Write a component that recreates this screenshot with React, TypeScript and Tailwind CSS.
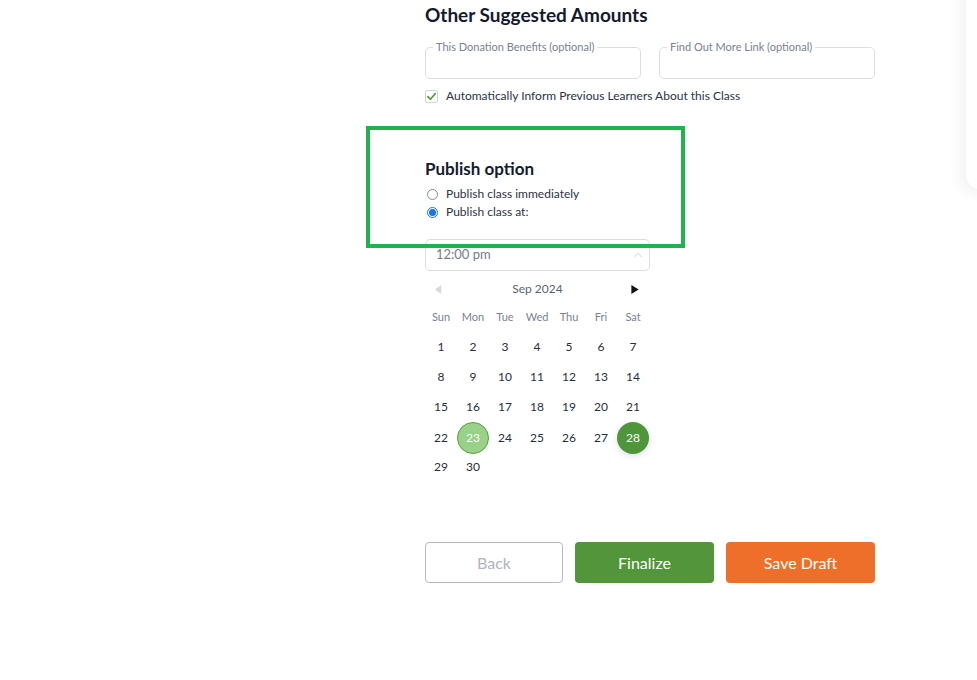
import { ChevronUp } from 'lucide-react';

const DAY_NAMES = ['Sun', 'Mon', 'Tue', 'Wed', 'Thu', 'Fri', 'Sat'];

// Sep 2024 starts on a Sunday
const WEEKS: (number | null)[][] = [
  [1, 2, 3, 4, 5, 6, 7],
  [8, 9, 10, 11, 12, 13, 14],
  [15, 16, 17, 18, 19, 20, 21],
  [22, 23, 24, 25, 26, 27, 28],
  [29, 30, null, null, null, null, null],
];

export default function App() {
  return (
    <div className="relative min-h-[680px] w-full overflow-hidden bg-white font-['Lato',sans-serif] text-[#1d2233]">
      {/* faint side panel shadow at the right edge */}
      <div className="absolute -top-4 left-[966px] h-[206px] w-[40px] rounded-bl-2xl bg-white shadow-[-6px_4px_14px_rgba(0,0,0,0.05)]" />

      <div className="relative ml-[425px] w-[450px] pt-[3px]">
        <h2 className="text-[19px] font-bold leading-6 text-[#141a2e]">Other Suggested Amounts</h2>

        <div className="mt-[14px] flex gap-[18px]">
          <OutlinedField label="This Donation Benefits (optional)" />
          <OutlinedField label="Find Out More Link (optional)" />
        </div>

        <label className="mt-[9px] flex items-center gap-[8px] text-[12px] leading-4 text-[#2c3144]">
          <span className="flex h-[13px] w-[13px] items-center justify-center rounded-[2px] border border-[#cfd3da] bg-white">
            <svg viewBox="0 0 12 12" className="h-[11px] w-[11px]">
              <path d="M2 6.2 L4.8 9 L10.2 2.8" fill="none" stroke="#4e9a36" strokeWidth="1.8" strokeLinecap="round" strokeLinejoin="round" />
            </svg>
          </span>
          Automatically Inform Previous Learners About this Class
        </label>

        <h3 className="mt-[55px] text-[17px] font-bold leading-5 text-[#141a2e]">Publish option</h3>

        <div className="mt-[7px] flex flex-col gap-[2px] text-[12px] leading-4 text-[#2c3144]">
          <label className="flex items-center gap-[8px]">
            <span className="ml-[2px] h-[11px] w-[11px] rounded-full border border-[#8a8a8a] bg-white" />
            Publish class immediately
          </label>
          <label className="flex items-center gap-[8px]">
            <span className="ml-[2px] flex h-[11px] w-[11px] items-center justify-center rounded-full border border-[#1a73e8] bg-white">
              <span className="h-[7px] w-[7px] rounded-full bg-[#1a73e8]" />
            </span>
            Publish class at:
          </label>
        </div>

        <div className="mt-[19px] flex h-[32px] w-[225px] items-center justify-between rounded-[5px] border border-[#dcdde2] pl-[10px] pr-[4px] text-[13px] text-[#777b87]">
          <span>12:00 pm</span>
          <ChevronUp className="h-[14px] w-[14px] text-[#c9cbd2]" strokeWidth={1.5} />
        </div>

        <div className="w-[224px] pt-[9px]">
          <div className="flex h-[18px] items-center justify-between px-[10px] text-[12px] text-[#5c6272]">
            <svg viewBox="0 0 8 10" className="h-[9px] w-[7px]">
              <path d="M7 0 L7 10 L0 5 Z" fill="#d8d8d8" />
            </svg>
            <span className="ml-[2px]">Sep 2024</span>
            <svg viewBox="0 0 8 10" className="h-[9px] w-[8px]">
              <path d="M0 0 L0 10 L8 5 Z" fill="#111" />
            </svg>
          </div>

          <div className="mt-[11px] grid grid-cols-7 text-center text-[11px] leading-4 text-[#7a8194]">
            {DAY_NAMES.map((d) => (
              <span key={d}>{d}</span>
            ))}
          </div>

          <div className="mt-[7px] flex flex-col">
            {WEEKS.map((week, i) => (
              <div key={i} className="grid h-[30px] grid-cols-7 items-center text-center text-[12px] text-[#2a2d3a]">
                {week.map((day, j) => (
                  <div key={j} className="flex items-center justify-center">
                    {day === 23 ? (
                      <span className="flex h-[32px] w-[32px] items-center justify-center rounded-full border border-[#5b9e45] bg-[#98d187] text-white">
                        {day}
                      </span>
                    ) : day === 28 ? (
                      <span className="flex h-[32px] w-[32px] items-center justify-center rounded-full bg-[#4f963a] text-white shadow-[0_2px_6px_rgba(60,80,160,0.18)]">
                        {day}
                      </span>
                    ) : (
                      <span>{day ?? ''}</span>
                    )}
                  </div>
                ))}
              </div>
            ))}
          </div>
        </div>

        <div className="mt-[60px] flex gap-[12px] text-[16px]">
          <button className="h-[41px] w-[138px] rounded-[4px] border border-[#b9b9c6] bg-white text-[#b3b3bf]">Back</button>
          <button className="h-[41px] w-[139px] rounded-[4px] bg-[#52953a] text-white">Finalize</button>
          <button className="h-[41px] w-[149px] rounded-[4px] bg-[#ed6f29] text-white">Save Draft</button>
        </div>
      </div>

      {/* annotation box drawn over the page */}
      <div className="pointer-events-none absolute left-[366px] top-[126px] h-[122px] w-[319px] border-4 border-[#22b14c]" />
    </div>
  );
}

function OutlinedField({ label }: { label: string }) {
  return (
    <fieldset className="h-[38px] w-[216px] rounded-[5px] border border-[#dcdde2] px-[7px]">
      <legend className="px-[3px] text-[11px] leading-3 text-[#7c8090]">{label}</legend>
    </fieldset>
  );
}
